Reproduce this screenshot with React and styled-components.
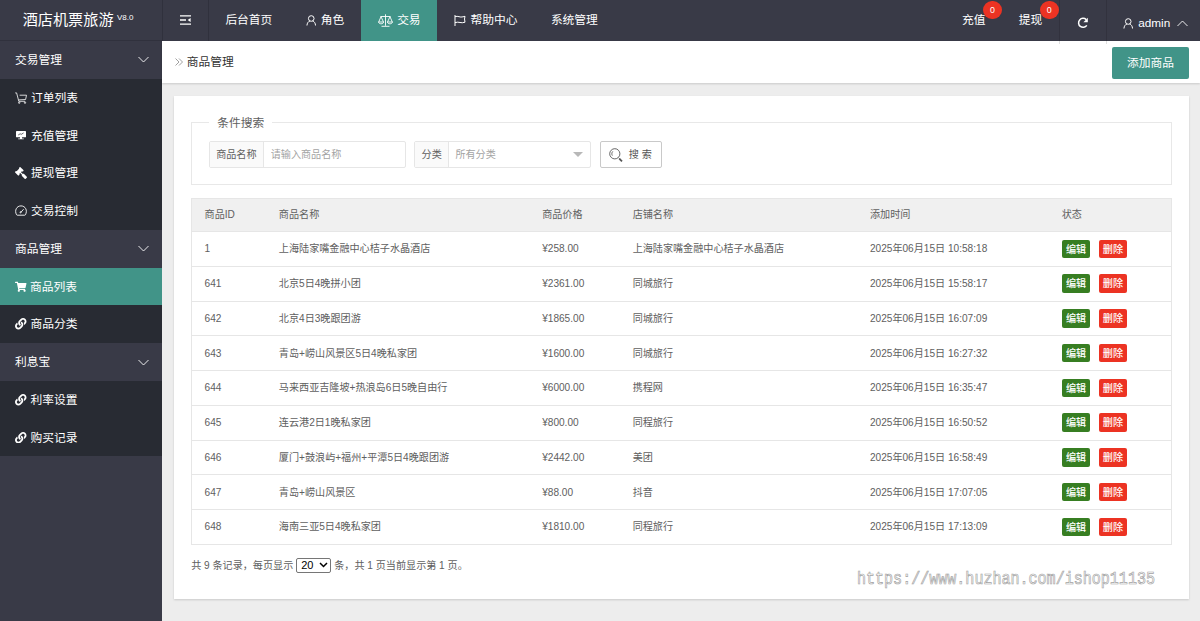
import React, { useState } from "react";
import styled, { createGlobalStyle } from "styled-components";
import { FaGavel, FaLink, FaShoppingCart } from "react-icons/fa";

const GlobalStyle = createGlobalStyle`
  * {
    box-sizing: border-box;
  }
  body {
    margin: 0;
    background: #ededed;
    color: #606060;
    font: 10.1px/1.5 "Liberation Sans", "Noto Sans CJK SC", sans-serif;
    overflow: hidden;
  }
  input, button {
    font: inherit;
  }
`;

const Layout = styled.div`
  display: flex;
  height: 621px;
`;
const Sidebar = styled.aside`
  width: 161.7px;
  flex: none;
  background: #393a47;
  color: #fff;
`;
const Logo = styled.div`
  display: flex;
  align-items: flex-start;
  height: 41px;
  padding: 8px 0 0 22.7px;
  border-bottom: 1px solid #30313d;
  font-size: 15.15px;
  line-height: 23px;
  sup {
    margin-left: 3.5px;
    font-size: 8px;
    line-height: 19px;
  }
`;
const MenuTitle = styled.div`
  display: flex;
  align-items: center;
  justify-content: space-between;
  height: 37.78px;
  padding: 0 12.5px 0 15px;
  font-size: 11.75px;
`;
const MenuItem = styled.div`
  display: flex;
  align-items: center;
  height: 37.78px;
  padding: 0 0 0 15px;
  font-size: 11.75px;
  background: ${(props) => (props.$active ? "#419488" : "#282b33")};
  svg {
    flex: none;
    margin-right: ${(props) => (props.$active ? "3.5px" : "4px")};
  }
`;
const GavelIcon = styled(FaGavel)`
  transform: scaleX(-1);
`;

const Main = styled.main`
  flex: 1;
  min-width: 0;
`;
const TopBar = styled.header`
  display: flex;
  justify-content: space-between;
  height: 41px;
  background: #393a47;
  color: #fff;
  font-size: 11.75px;
`;
const NavGroup = styled.nav`
  display: flex;
`;
const NavItem = styled.div`
  position: relative;
  display: flex;
  align-items: center;
  height: 41px;
  padding: 0 16.7px 1px;
  background: ${(props) => (props.$active ? "#419488" : "transparent")};
  svg {
    margin-right: 4.5px;
  }
`;
const ToggleItem = styled(NavItem)`
  justify-content: center;
  width: 47px;
  padding: 0 0 1px;
  border-left: 1px solid #30313d;
  border-right: 1px solid #30313d;
  svg {
    margin: 0;
  }
`;
const Badge = styled.span`
  position: absolute;
  top: 1px;
  right: 0.5px;
  width: 18.4px;
  height: 18.4px;
  border-radius: 50%;
  background: #ec3323;
  font-size: 8.8px;
  line-height: 18.4px;
  text-align: center;
`;
const ToolItem = styled(NavItem)`
  height: 44px;
  padding: 2px 0 0;
  justify-content: center;
  width: ${(props) => props.$width};
  border-left: 1px solid rgba(0, 0, 0, 0.12);
  svg {
    margin: 0;
  }
`;
const UserItem = styled(ToolItem)`
  padding-left: 4px;
`;
const UserName = styled.span`
  margin: 0 7px 0 5px;
`;

const Crumb = styled.div`
  display: flex;
  align-items: center;
  justify-content: space-between;
  height: 42px;
  padding: 0 11px 0 13px;
  background: #fff;
  box-shadow: 0 1px 2px rgba(0, 0, 0, 0.15);
`;
const CrumbTitle = styled.div`
  display: flex;
  align-items: center;
  gap: 4px;
  font-size: 11.75px;
  color: #333;
`;
const AddButton = styled.button`
  width: 77px;
  height: 32px;
  margin-top: 2px;
  padding: 0;
  border: 0;
  border-radius: 2px;
  background: #419488;
  color: #fff;
  font-size: 11.75px;
`;
const Card = styled.section`
  height: 503px;
  margin: 13px 11px 0 12.7px;
  padding: 17px 16.8px;
  background: #fff;
  box-shadow: 0 1px 2px rgba(0, 0, 0, 0.15);
`;
const SearchBox = styled.fieldset`
  height: 72px;
  margin: 0 0 13px;
  padding: 0 16.8px;
  border: 1px solid #e8e8e8;
  legend {
    padding: 0 8.2px;
    font-size: 11.75px;
    line-height: 19px;
  }
`;
const SearchForm = styled.form`
  display: flex;
  gap: 8.4px;
  padding-top: 9px;
`;
const Field = styled.label`
  display: flex;
  width: ${(props) => props.$width};
  height: 27px;
  border: 1px solid #e6e6e6;
  border-radius: 2px;
`;
const FieldName = styled.span`
  flex: none;
  padding: 0 6.2px;
  border-right: 1px solid #e6e6e6;
  background: #fafafa;
  line-height: 25px;
`;
const TextInput = styled.input`
  flex: 1;
  min-width: 0;
  padding: 0 0 0 7px;
  border: 0;
  outline: 0;
  background: transparent;
  &::placeholder {
    color: #a3a3a3;
  }
`;
const FakeSelect = styled.span`
  flex: 1;
  display: flex;
  align-items: center;
  justify-content: space-between;
  padding: 0 7.5px 0 6.5px;
  color: #a3a3a3;
  &::after {
    content: "";
    border: 5px solid transparent;
    border-top-color: #b8b8b8;
    border-bottom: 0;
  }
`;
const SearchButton = styled.button`
  display: flex;
  align-items: center;
  gap: 5.5px;
  width: 62px;
  height: 27px;
  padding: 0 0 0 8.5px;
  border: 1px solid #c9c9c9;
  border-radius: 2px;
  background: #fff;
  color: #555;
`;

const Table = styled.table`
  width: 100%;
  table-layout: fixed;
  border-collapse: separate;
  border-spacing: 0;
  border: 1px solid #e6e6e6;
  th, td {
    padding: 0 0 0 12.4px;
    border-bottom: 1px solid #e6e6e6;
    font-weight: 400;
    text-align: left;
    white-space: nowrap;
  }
  th {
    height: 33px;
    background: #f0f0f0;
  }
  td {
    height: 34.75px;
  }
  tr:last-child td {
    height: 33.75px;
    border-bottom: 0;
  }
`;
const Actions = styled.div`
  display: flex;
  gap: 8.4px;
`;
const ActionButton = styled.button`
  width: 28.5px;
  height: 18.5px;
  padding: 0;
  border: 0;
  border-radius: 2px;
  background: ${(props) => (props.$danger ? "#ec3323" : "#377e22")};
  color: #fff;
  font-weight: 500;
  line-height: 19px;
`;
const Pager = styled.div`
  display: flex;
  align-items: center;
  gap: 3px;
  margin-top: 13px;
`;
const PageSize = styled.span`
  display: flex;
  align-items: center;
  justify-content: space-between;
  width: 35px;
  height: 15px;
  padding: 0 2px 0 4px;
  border: 1px solid #767676;
  border-radius: 2px;
  color: #000;
  font-size: 11px;
`;
const Watermark = styled.div`
  position: absolute;
  left: 857px;
  top: 569px;
  font: 15.05px/20px "Liberation Mono", monospace;
  color: #fff;
  -webkit-text-stroke: 0.6px #a2a2a2;
  transform: scaleY(1.2);
`;

const Icon = ({ w = 12, h = w, box = "0 0 16 16", sw = 1.2, children }) => (
  <svg
    width={w}
    height={h}
    viewBox={box}
    fill="none"
    stroke="currentColor"
    strokeWidth={sw}
  >
    {children}
  </svg>
);
const Chevron = ({ up }) => (
  <Icon w={11} h={7} box="0 0 11 7" sw={0.9}>
    <path d={up ? "M.5 6 5.5 1l5 5" : "M.5 1l5 5 5-5"} />
  </Icon>
);
const UserIcon = () => (
  <Icon w={10.5} h={11} box="0 0 10 11" sw={1}>
    <circle cx="5" cy="3.5" r="2.8" />
    <path d="M.7 10.5C.9 8 2 6.5 3.7 6M9.3 10.5C9.1 8 8 6.5 6.3 6" />
  </Icon>
);
const ToggleIcon = () => (
  <Icon w={11} h={10} box="0 0 11 10" sw={1.3}>
    <path d="M0 .8h11M0 5h6M0 9.2h11" />
    <path d="M10.6 3v4L7.7 5z" fill="currentColor" stroke="none" />
  </Icon>
);
const ScaleIcon = () => (
  <Icon w={15} h={13} box="0 0 15 13" sw={0.9}>
    <path d="M7.5.3v11.5M3.5 12.3h8M2.5 2.5h10M3 2.7.7 8M3 2.7 5.5 8M12 2.7 9.5 8M12 2.7 14.3 8M.5 8h5.2c-.3 2.4-4.9 2.4-5.2 0zM9.3 8h5.2c-.3 2.4-4.9 2.4-5.2 0z" />
  </Icon>
);
const FlagIcon = () => (
  <Icon w={12} h={11} box="0 0 12 11" sw={1}>
    <path d="M1 0v11M1 1.7c3-1.3 5 1.2 8 .1l2-.5-.5 2.7.5 3.2c-4 1.6-6-1-10 .4" />
  </Icon>
);
const CartIcon = () => (
  <Icon w={12} h={12} box="0 0 12 12" sw={0.8}>
    <path d="M.2.9h1.4l2.2 8.4h6.4M4.6 3.2h6.9l-.9 4.3-6.9.4" />
    <circle cx="4.2" cy="10.7" r=".7" />
    <circle cx="10" cy="10.7" r=".7" />
  </Icon>
);
const BoardIcon = () => (
  <Icon w={12} h={10} box="0 0 12 10">
    <path
      d="M1.7 1h8.6q.7 0 .7.7v5q0 .6-.7.6H7V8.4h1.8v.8H3.2v-.8H5V7.3H1.7Q1 7.3 1 6.7v-5Q1 1 1.7 1z"
      fill="currentColor"
      stroke="none"
    />
    <path d="m3.2 5 2-1.2 1 .6 2.4-1.5" stroke="#282b33" strokeWidth=".7" />
  </Icon>
);
const GaugeIcon = () => (
  <Icon w={12} h={11} box="0 0 12 11" sw={0.9}>
    <path d="M1.6 9.8C-.8 5.5 1.6.9 6 .9s6.8 4.6 4.4 8.9q-.2.4-.7.4H2.3q-.5 0-.7-.4zM6 7.2l2.6-3" />
    <circle cx="5.6" cy="7.3" r=".6" />
  </Icon>
);
const SearchIcon = () => (
  <Icon w={14} h={14} box="0 0 14 14" sw={0.9}>
    <circle cx="5.8" cy="5.8" r="5.1" />
    <path d="M3.3 7.6C2.5 6 2.8 4.4 3.8 3.4M9.5 9.7l1 1" />
    <path d="m10.3 10.6 2.7 2.7" strokeWidth="1.8" />
  </Icon>
);
const ReloadIcon = () => (
  <Icon w={12} h={12} box="0 0 12 12" sw={1.5}>
    <path d="M9.8 8.4A4.5 4.5 0 1 1 9.2 2.6" />
    <path d="M10.8.7v4.5H6.4z" fill="currentColor" stroke="none" />
  </Icon>
);
const CrumbIcon = () => (
  <Icon w={8} h={8} box="0 0 8 8" sw={0.8}>
    <path d="M.5.5 4 4 .5 7.5M4 .5 7.5 4 4 7.5" stroke="#888" />
  </Icon>
);

const menus = [
  {
    title: "交易管理",
    items: [
      { name: "订单列表", icon: <CartIcon /> },
      { name: "充值管理", icon: <BoardIcon /> },
      { name: "提现管理", icon: <GavelIcon size={12} /> },
      { name: "交易控制", icon: <GaugeIcon /> },
    ],
  },
  {
    title: "商品管理",
    items: [
      { name: "商品列表", icon: <FaShoppingCart size={11.5} />, active: true },
      { name: "商品分类", icon: <FaLink size={11.5} /> },
    ],
  },
  {
    title: "利息宝",
    items: [
      { name: "利率设置", icon: <FaLink size={11.5} /> },
      { name: "购买记录", icon: <FaLink size={11.5} /> },
    ],
  },
];

const columns = [
  { name: "商品ID", width: "74.3px" },
  { name: "商品名称", width: "263.3px" },
  { name: "商品价格", width: "90.5px" },
  { name: "店铺名称", width: "237.3px" },
  { name: "添加时间", width: "191.8px" },
  { name: "状态" },
];

const goods = [
  [1, "上海陆家嘴金融中心桔子水晶酒店", "258.00", "上海陆家嘴金融中心桔子水晶酒店", "10:58:18"],
  [641, "北京5日4晚拼小团", "2361.00", "同城旅行", "15:58:17"],
  [642, "北京4日3晚跟团游", "1865.00", "同城旅行", "16:07:09"],
  [643, "青岛+崂山风景区5日4晚私家团", "1600.00", "同城旅行", "16:27:32"],
  [644, "马来西亚吉隆坡+热浪岛6日5晚自由行", "6000.00", "携程网", "16:35:47"],
  [645, "连云港2日1晚私家团", "800.00", "同程旅行", "16:50:52"],
  [646, "厦门+鼓浪屿+福州+平潭5日4晚跟团游", "2442.00", "美团", "16:58:49"],
  [647, "青岛+崂山风景区", "88.00", "抖音", "17:07:05"],
  [648, "海南三亚5日4晚私家团", "1810.00", "同程旅行", "17:13:09"],
];

const SideMenu = () => (
  <Sidebar>
    <Logo>
      酒店机票旅游<sup>V8.0</sup>
    </Logo>
    {menus.map((menu) => (
      <div key={menu.title}>
        <MenuTitle>
          {menu.title}
          <Chevron />
        </MenuTitle>
        {menu.items.map((item) => (
          <MenuItem key={item.name} $active={item.active}>
            {item.icon}
            {item.name}
          </MenuItem>
        ))}
      </div>
    ))}
  </Sidebar>
);

const Header = () => (
  <TopBar>
    <NavGroup>
      <ToggleItem>
        <ToggleIcon />
      </ToggleItem>
      <NavItem>后台首页</NavItem>
      <NavItem>
        <UserIcon />
        角色
      </NavItem>
      <NavItem $active>
        <ScaleIcon />
        交易
      </NavItem>
      <NavItem>
        <FlagIcon />
        帮助中心
      </NavItem>
      <NavItem>系统管理</NavItem>
    </NavGroup>
    <NavGroup>
      <NavItem>
        充值<Badge>0</Badge>
      </NavItem>
      <NavItem>
        提现<Badge>0</Badge>
      </NavItem>
      <ToolItem $width="47px">
        <ReloadIcon />
      </ToolItem>
      <UserItem $width="94px">
        <UserIcon />
        <UserName>admin</UserName>
        <Chevron up />
      </UserItem>
    </NavGroup>
  </TopBar>
);

const GoodsTable = () => (
  <Table>
    <colgroup>
      {columns.map((col) => (
        <col key={col.name} style={{ width: col.width }} />
      ))}
    </colgroup>
    <thead>
      <tr>
        {columns.map((col) => (
          <th key={col.name}>{col.name}</th>
        ))}
      </tr>
    </thead>
    <tbody>
      {goods.map(([id, name, price, shop, time]) => (
        <tr key={id}>
          <td>{id}</td>
          <td>{name}</td>
          <td>¥{price}</td>
          <td>{shop}</td>
          <td>2025年06月15日 {time}</td>
          <td>
            <Actions>
              <ActionButton>编辑</ActionButton>
              <ActionButton $danger>删除</ActionButton>
            </Actions>
          </td>
        </tr>
      ))}
    </tbody>
  </Table>
);

const App = () => {
  const [keyword, setKeyword] = useState("");
  return (
    <>
      <GlobalStyle />
      <Layout>
        <SideMenu />
        <Main>
          <Header />
          <Crumb>
            <CrumbTitle>
              <CrumbIcon />
              商品管理
            </CrumbTitle>
            <AddButton>添加商品</AddButton>
          </Crumb>
          <Card>
            <SearchBox>
              <legend>条件搜索</legend>
              <SearchForm onSubmit={(e) => e.preventDefault()}>
                <Field $width="197px">
                  <FieldName>商品名称</FieldName>
                  <TextInput
                    placeholder="请输入商品名称"
                    value={keyword}
                    onChange={(e) => setKeyword(e.target.value)}
                  />
                </Field>
                <Field $width="177px">
                  <FieldName>分类</FieldName>
                  <FakeSelect>所有分类</FakeSelect>
                </Field>
                <SearchButton>
                  <SearchIcon />搜 索
                </SearchButton>
              </SearchForm>
            </SearchBox>
            <GoodsTable />
            <Pager>
              共 9 条记录，每页显示
              <PageSize>
                20
                <Icon w={9} h={6} box="0 0 9 6" sw={1.5}>
                  <path d="m1 1 3.5 3.5L8 1" />
                </Icon>
              </PageSize>
              条，共 1 页当前显示第 1 页。
            </Pager>
          </Card>
        </Main>
      </Layout>
      <Watermark>https://www.huzhan.com/ishop11135</Watermark>
    </>
  );
};

export default App;
